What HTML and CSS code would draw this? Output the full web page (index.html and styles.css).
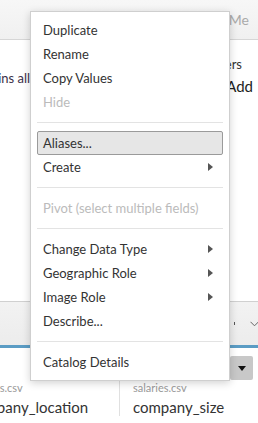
FILE: index.html
```html
<!DOCTYPE html>
<html lang="en">
<head>
  <meta charset="UTF-8">
  <title>Data Source - Field Menu</title>
  <link rel="stylesheet" href="styles.css">
</head>
<body>
  <header class="topbar">
    <span class="show-me">Show Me</span>
  </header>

  <div class="main">
    <div class="conn-text">Connection contains all</div>
    <div class="filters">
      <div class="filters-title">Filters</div>
      <div class="filters-add">0 | Add</div>
    </div>
  </div>

  <div class="toolbar">
    <span class="tool-dot"></span>
    <svg class="chevron" width="9" height="6" viewBox="0 0 9 6">
      <path d="M0.5 0.8 L4.5 4.8 L8.5 0.8" fill="none" stroke="#666" stroke-width="1"/>
    </svg>
  </div>

  <div class="grid-head">
    <div class="col col-first">
      <div class="src">salaries.csv</div>
      <div class="field">company_location</div>
    </div>
    <div class="col col-second">
      <button class="drop"><span class="tri-down"></span></button>
      <div class="src">salaries.csv</div>
      <div class="field">company_size</div>
    </div>
  </div>

  <div class="menu">
    <div class="item">Duplicate</div>
    <div class="item">Rename</div>
    <div class="item">Copy Values</div>
    <div class="item disabled">Hide</div>
    <div class="sep"></div>
    <div class="item active">Aliases...</div>
    <div class="item">Create <span class="tri"></span></div>
    <div class="sep"></div>
    <div class="item disabled">Pivot (select multiple fields)</div>
    <div class="sep"></div>
    <div class="item">Change Data Type <span class="tri"></span></div>
    <div class="item">Geographic Role <span class="tri"></span></div>
    <div class="item">Image Role <span class="tri"></span></div>
    <div class="item">Describe...</div>
    <div class="sep"></div>
    <div class="item">Catalog Details</div>
  </div>
</body>
</html>
```

FILE: styles.css
```css
body { margin: 0; font-family: Lato, "Liberation Sans", sans-serif; color: #333; background: #fff; width: 258px; height: 423px; overflow: hidden; position: relative; }
.topbar { height: 39px; background: linear-gradient(#f7f7f7, #f0f0f0); border-bottom: 1px solid #d6d6d6; display: flex; align-items: center; justify-content: flex-end; padding-right: 9px; }
.show-me { font-size: 14px; color: #aaa; }
.main { height: 261px; display: flex; justify-content: space-between; }
.conn-text { font-size: 13px; color: #3a3048; margin-left: -103px; margin-top: 30px; white-space: nowrap; }
.filters { width: 80px; padding-top: 16px; }
.filters-title { font-size: 13px; text-align: right; padding-right: 16px; }
.filters-add { font-size: 15px; color: #222; text-align: right; padding-right: 5px; margin-top: 5px; }
.toolbar { height: 43px; background: linear-gradient(#f2f2f2, #ececec); border-top: 1px solid #d0d0d0; display: flex; align-items: center; justify-content: flex-end; gap: 15px; padding-right: 0; }
.tool-dot { width: 1px; height: 3px; background: #555; }
.chevron { display: block; margin-right: -1px; }
.grid-head { border-top: 3px solid #5b9cc4; display: flex; margin-left: -44px; }
.col { padding: 0 0 0 13px; box-sizing: border-box; position: relative; }
.col-first { width: 164px; border-right: 1px solid #e0e0e0; }
.col-second { width: 138px; }
.src { font-size: 11px; color: #999; margin-top: 33px; }
.field { font-size: 15px; color: #333; margin-top: 4px; white-space: nowrap; }
.drop { position: absolute; right: 5px; top: 8px; width: 23px; height: 24px; border: none; border-radius: 2px; background: #c8c8c8; padding: 0; display: flex; align-items: center; justify-content: center; }
.tri-down { width: 0; height: 0; border-top: 5px solid #111; border-left: 4px solid transparent; border-right: 4px solid transparent; }

.menu { position: absolute; left: 30px; top: 11px; width: 200px; box-sizing: border-box; background: #fff; border: 1px solid #cfcfcf; box-shadow: 0 2px 8px rgba(0,0,0,0.18); padding: 6px 0; }
.item { height: 24px; display: flex; align-items: center; justify-content: space-between; padding: 0 16px 0 12px; font-size: 13px; color: #333; white-space: nowrap; }
.item.disabled { color: #bbb; }
.item.active { margin: 0 6px; padding-left: 5px; padding-right: 9px; height: 22px; border: 1px solid #9a9a9a; border-radius: 2px; background: #e6e6e6; }
.tri { width: 0; height: 0; border-left: 5px solid #555; border-top: 4px solid transparent; border-bottom: 4px solid transparent; }
.sep { height: 1px; background: #e3e3e3; margin: 8px 6px; }
```
